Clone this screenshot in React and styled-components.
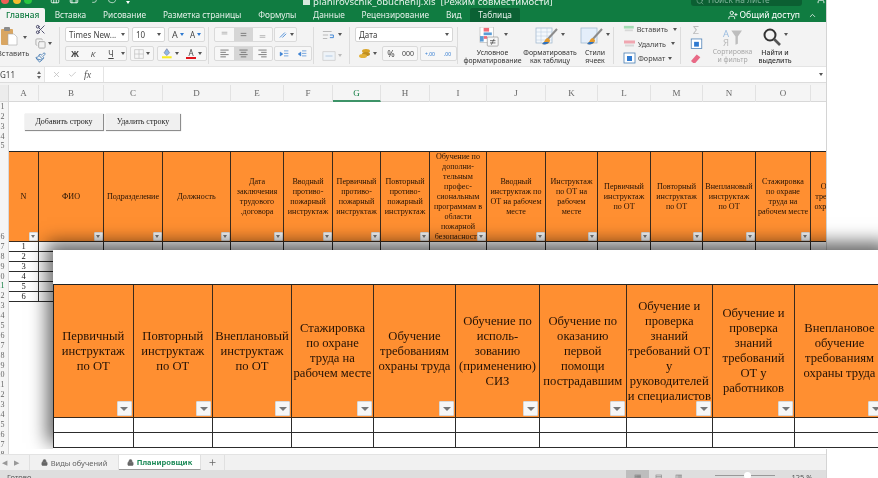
import React from 'react';
import styled, { createGlobalStyle } from 'styled-components';
import { Scissors, Copy, Paintbrush, Home, Save, Undo2, RotateCw, Search, User, UserPlus, ChevronUp, X, Check, Plus, Lock } from 'lucide-react';

const GlobalStyle = createGlobalStyle`
  html, body { margin: 0; padding: 0; background: #fff; }
  body { font-family: 'Noto Sans', sans-serif; }
  * { box-sizing: border-box; }
`;

const Page = styled.div`
  position: relative;
  width: 878px;
  height: 478px;
  overflow: hidden;
  background: #fff;
  filter: blur(0.3px);
`;

const Excel = styled.div`
  width: 827px;
  height: 478px;
  display: flex;
  flex-direction: column;
  overflow: hidden;
  border-right: 1px solid #d4d4d4;
  background: #fff;
`;

const GreenBar = styled.div`
  background: #107c41;
  height: 22px;
  flex: none;
  color: #fff;
`;

const TitleRow = styled.div`
  height: 7px;
  display: flex;
  align-items: flex-end;
  overflow: hidden;
  padding-left: 1px;
`;

const Lights = styled.div`
  display: flex;
  gap: 3.5px;
  width: 49px;
  flex: none;
  margin-bottom: 3px;
`;

const Light = styled.span`
  width: 8px;
  height: 8px;
  border-radius: 50%;
  background: ${(p) => p.$color};
  flex: none;
`;

const QuickIcons = styled.div`
  display: flex;
  align-items: flex-end;
  gap: 9px;
  width: 95px;
  flex: none;
  margin-bottom: 3px;
`;

const DocMark = styled.span`
  width: 7px;
  height: 8px;
  flex: none;
  margin: 0 3px 2px 158px;
  background: #d8e8de;
`;

const FileTitle = styled.span`
  font-size: 9.6px;
  line-height: 11px;
  color: #e6f2ea;
  white-space: pre;
`;

const SheetSearch = styled.div`
  margin: 0 14px 1px auto;
  width: 111px;
  height: 14px;
  flex: none;
  border-radius: 3px;
  background: #0b5f32;
  font-size: 8.4px;
  line-height: 10px;
  padding: 0 0 1px 5px;
  color: #7fb298;
  display: flex;
  align-items: flex-end;
  gap: 4px;
`;

const UserMark = styled(User)`
  flex: none;
  margin-bottom: 3px;
`;

const Tabs = styled.div`
  height: 15px;
  display: flex;
  align-items: stretch;
  padding-top: 1px;
`;

const Tab = styled.div`
  font-size: 8.3px;
  line-height: 14px;
  padding: 0 ${(p) => p.$pad ?? 8.4}px;
  white-space: nowrap;
  border-radius: 2px 2px 0 0;
  color: ${(p) => (p.$on ? '#107c41' : '#e4f0e9')};
  background: ${(p) => (p.$on ? '#f3f3f3' : p.$dark ? '#0b6134' : 'transparent')};
  font-weight: ${(p) => (p.$on ? 500 : 400)};
  margin-right: ${(p) => p.$mr || 0}px;
`;

const Share = styled.div`
  margin-left: auto;
  display: flex;
  align-items: center;
  gap: 2px;
  font-size: 8.6px;
  padding-right: 9px;
  color: #fff;
`;

const ShareChevron = styled(ChevronUp)`
  margin-left: 6px;
`;

const Ribbon = styled.div`
  height: 44px;
  flex: none;
  background: #f3f3f3;
  display: flex;
  padding: 5px 0 0;
`;

const Group = styled.div`
  width: ${(p) => p.$w}px;
  height: 37px;
  flex: none;
  padding-left: ${(p) => p.$pl || 0}px;
  border-right: ${(p) => (p.$last ? 'none' : '1px solid #dcdcdc')};
  display: flex;
  flex-direction: ${(p) => p.$dir || 'column'};
  gap: ${(p) => p.$gap ?? 4}px;
  position: relative;
  color: #555;
`;

const Row = styled.div`
  display: flex;
  gap: ${(p) => p.$gap ?? 3}px;
  height: 15px;
  align-items: ${(p) => (p.$center ? 'center' : 'stretch')};
`;

const Select = styled.div`
  width: ${(p) => p.$w}px;
  background: #fff;
  border: 1px solid #d6d6d6;
  border-radius: 2px;
  font-size: 8px;
  line-height: 13px;
  padding-left: 3px;
  color: #444;
  display: flex;
  justify-content: space-between;
  align-items: center;
  white-space: nowrap;
  overflow: hidden;
`;

const Caret = styled.span`
  width: 0;
  height: 0;
  flex: none;
  margin: ${(p) => p.$mt ?? 0}px ${(p) => p.$m ?? 0}px 0;
  border-left: 2px solid transparent;
  border-right: 2px solid transparent;
  border-top: 3px solid ${(p) => p.$c || '#555'};
`;

const PasteCaret = styled(Caret)`
  position: absolute;
  left: 23px;
  top: 9px;
`;

const BtnSet = styled.div`
  display: flex;
  border: 1px solid #dadada;
  border-radius: 2px;
  background: #f7f7f7;
  margin-left: ${(p) => p.$ml || 0}px;
`;

const Btn = styled.div`
  width: ${(p) => p.$w || 18}px;
  display: flex;
  align-items: center;
  justify-content: center;
  gap: 2px;
  font-size: ${(p) => p.$fs || 9}px;
  font-style: ${(p) => (p.$it ? 'italic' : 'normal')};
  font-weight: ${(p) => (p.$b ? 700 : 400)};
  text-decoration: ${(p) => (p.$u ? 'underline' : 'none')};
  background: ${(p) => (p.$on ? '#d6d6d6' : 'transparent')};
  color: ${(p) => (p.$blue ? '#2f7ad1' : '#444')};
`;

const TextColorMark = styled.span`
  border-bottom: 2.5px solid #e0141c;
  line-height: 9px;
  padding: 0 2px;
`;

const PasteBlock = styled.div`
  width: 30px;
  display: flex;
  flex-direction: column;
  align-items: flex-start;
`;

const SmallCol = styled.div`
  display: flex;
  flex-direction: column;
  gap: 3px;
  align-items: center;
  color: #555;
  width: 20px;
  margin-top: -3px;
`;

const CopyRow = styled.div`
  display: flex;
  align-items: center;
  gap: 2px;
  margin-right: -7px;
`;

const PasteLabel = styled.span`
  font-size: 7.4px;
  line-height: 10px;
  margin: 2px 0 0 -3px;
  color: #444;
`;

const Sigma = styled.span`
  font-size: 11px;
  line-height: 11px;
  color: #bbb;
`;

const Big = styled.div`
  width: ${(p) => p.$w}px;
  flex: none;
  color: ${(p) => (p.$off ? '#a8a8a8' : '#333')};
  display: flex;
  flex-direction: column;
  align-items: center;
  font-size: 6.9px;
  line-height: 8.2px;
  text-align: center;
  white-space: pre;
  font-weight: ${(p) => (p.$strong ? 500 : 400)};
`;

const BigIcon = styled.div`
  height: 20px;
  margin-bottom: 2px;
  display: flex;
  align-items: flex-start;
  gap: 2px;
`;

const CellAction = styled.div`
  display: flex;
  align-items: center;
  gap: 2px;
  height: 12px;
  font-size: 7.2px;
  color: #444;
  white-space: nowrap;
  &:first-child {
    margin-top: -4px;
  }
`;

const FormulaBar = styled.div`
  height: 17px;
  flex: none;
  background: #fff;
  display: flex;
  align-items: center;
  border-top: 1px solid #e4e4e4;
  border-bottom: 1px solid #dcdcdc;
  font-size: 8px;
  color: #444;
`;

const NameBox = styled.div`
  width: 45px;
  height: 100%;
  display: flex;
  justify-content: space-between;
  align-items: center;
  padding-right: 3px;
  background: #f8f8f8;
  border-right: 1px solid #e4e4e4;
`;

const Stepper = styled.span`
  display: flex;
  flex-direction: column;
  gap: 2px;
  &::before {
    content: '';
    border-left: 2px solid transparent;
    border-right: 2px solid transparent;
    border-bottom: 3px solid #666;
  }
  &::after {
    content: '';
    border-left: 2px solid transparent;
    border-right: 2px solid transparent;
    border-top: 3px solid #666;
  }
`;

const FormulaIcons = styled.div`
  width: 59px;
  height: 100%;
  display: flex;
  align-items: center;
  padding-left: 7px;
  gap: 7px;
  color: #bcbcbc;
  border-right: 1px solid #e4e4e4;
`;

const Fx = styled.span`
  font-family: 'Liberation Serif', serif;
  font-style: italic;
  font-size: 10px;
  color: #555;
`;

const ExpandCaret = styled(Caret)`
  margin-left: auto;
  margin-right: 3px;
`;

const Gutter = styled.div`
  height: 2px;
  flex: none;
  background: #f3f3f3;
`;

const ColHead = styled.div`
  height: 17px;
  flex: none;
  display: flex;
  background: #f5f5f5;
  border-bottom: 1px solid #d8d8d8;
`;

const Corner = styled.div`
  width: 9px;
  flex: none;
  border-right: 1px solid #d8d8d8;
  background: #ececec;
`;

const ColLetter = styled.div`
  width: ${(p) => p.$w}px;
  flex: none;
  text-align: center;
  font-family: 'Liberation Serif', serif;
  font-size: 9px;
  line-height: 16px;
  color: ${(p) => (p.$on ? '#107c41' : '#666')};
  border-right: 1px solid #e2e2e2;
  border-bottom: ${(p) => (p.$on ? '2px solid #3d9368' : 'none')};
  height: 17px;
`;

const SheetArea = styled.div`
  flex: 1;
  min-height: 0;
  display: flex;
  overflow: hidden;
`;

const RowHeads = styled.div`
  width: 9px;
  flex: none;
  background: #f5f5f5;
  border-right: 1px solid #d8d8d8;
  overflow: hidden;
`;

const RowHead = styled.div`
  height: ${(p) => p.$h || 9.9}px;
  font-family: 'Liberation Serif', serif;
  font-size: 8px;
  line-height: 10px;
  display: flex;
  align-items: flex-end;
  justify-content: flex-end;
  padding-right: 3.5px;
  color: ${(p) => (p.$on ? '#107c41' : '#666')};
`;

const Sheet = styled.div`
  flex: 1;
  min-width: 0;
  overflow: hidden;
`;

const ButtonsRow = styled.div`
  height: 49px;
  display: flex;
  align-items: flex-start;
  gap: 2px;
  padding: 12px 0 0 16px;
`;

const MacroButton = styled.div`
  width: ${(p) => p.$w}px;
  height: 17px;
  background: #f0f0f0;
  border-right: 1px solid #8d8d8d;
  border-bottom: 1px solid #8d8d8d;
  box-shadow: 0 0 1px #bbb;
  font-family: 'Liberation Serif', serif;
  font-size: 8px;
  line-height: 16px;
  text-align: center;
  color: #222;
`;

const Grid = styled.div`
  display: grid;
  grid-template-columns: ${(p) => p.$cols};
  grid-template-rows: ${(p) => p.$head}px;
  grid-auto-rows: ${(p) => p.$rowH}px;
  width: max-content;
  border-top: ${(p) => (p.$big ? 1.5 : 1)}px solid #222;
  border-left: ${(p) => (p.$big ? '1px solid #222' : 'none')};
  font-family: 'Liberation Serif', serif;
`;

const HeadCell = styled.div`
  position: relative;
  background: #ff8f31;
  border-right: ${(p) => (p.$big ? 1.5 : 1)}px solid #3a2a1c;
  border-bottom: 1px solid #3a2a1c;
  display: flex;
  align-items: center;
  justify-content: center;
  text-align: center;
  white-space: pre;
  overflow: hidden;
  font-size: ${(p) => (p.$big ? 12.6 : 8.1)}px;
  line-height: ${(p) => (p.$big ? 15 : 10)}px;
  color: #241205;
`;

const FilterBtn = styled.span`
  position: absolute;
  right: ${(p) => (p.$big ? 1 : 0.5)}px;
  bottom: ${(p) => (p.$big ? 1 : 0.5)}px;
  width: ${(p) => (p.$big ? 15 : 9)}px;
  height: ${(p) => (p.$big ? 15 : 9)}px;
  background: #f6f6f6;
  border: ${(p) => (p.$big ? 1 : 0.5)}px solid #d8d8d8;
  border-radius: 1px;
  display: flex;
  align-items: center;
  justify-content: center;
  &::after {
    content: '';
    border-left: ${(p) => (p.$big ? 4 : 2.5)}px solid transparent;
    border-right: ${(p) => (p.$big ? 4 : 2.5)}px solid transparent;
    border-top: ${(p) => (p.$big ? 4 : 3)}px solid #777;
  }
`;

const DataCell = styled.div`
  background: #fff;
  border-right: ${(p) => (p.$big ? 1.5 : 1)}px solid #2c2c2c;
  border-bottom: 1px solid #2c2c2c;
  font-size: 8.5px;
  line-height: 9px;
  text-align: center;
  color: #222;
`;

const SheetTabs = styled.div`
  height: 16px;
  flex: none;
  background: #f1f1f1;
  border-top: 1px solid #e3e3e3;
  display: flex;
  align-items: stretch;
  font-size: 7.5px;
  color: #666;
`;

const TabArrows = styled.div`
  width: 30px;
  display: flex;
  align-items: center;
  gap: 7px;
  padding-left: 2px;
  border-right: 1px solid #e0e0e0;
  color: #999;
  font-size: 7px;
`;

const SheetTab = styled.div`
  width: ${(p) => p.$w}px;
  display: flex;
  align-items: center;
  justify-content: center;
  gap: 3px;
  background: ${(p) => (p.$on ? '#fff' : 'transparent')};
  color: ${(p) => (p.$on ? '#1c8a58' : '#666')};
  font-weight: ${(p) => (p.$on ? 700 : 400)};
  border-bottom: ${(p) => (p.$on ? '1px solid #999' : 'none')};
  border-right: 1px solid #e0e0e0;
`;

const StatusBar = styled.div`
  height: 8px;
  flex: none;
  background: #dedede;
  display: flex;
  font-size: 7.5px;
  line-height: 14px;
  color: #555;
  padding-left: 7px;
  overflow: hidden;
`;

const ViewBtn = styled.span`
  width: ${(p) => p.$w || 20}px;
  margin-left: ${(p) => p.$ml || 0}px;
  background: ${(p) => (p.$on ? '#bdbdbd' : 'transparent')};
  text-align: center;
  color: #777;
`;

const Slider = styled.span`
  width: 60px;
  height: 1px;
  background: #999;
  margin: 5px 0 0 26px;
  position: relative;
  &::after {
    content: '';
    position: absolute;
    left: 29px;
    top: -3px;
    width: 7px;
    height: 7px;
    border-radius: 50%;
    background: #fff;
  }
`;

const Zoom = styled.span`
  margin-left: 16px;
`;

const Snippet = styled.div`
  position: absolute;
  left: 53px;
  top: 250px;
  width: 840px;
  height: 199px;
  padding-top: 34px;
  background: #fff;
  box-shadow: -5px -7px 17px 1px rgba(0, 0, 0, 0.6);
  clip-path: inset(-40px -40px 0 -40px);
`;

const Gray = ({ children, size = 12, ...rest }) => (
  <svg width={size} height={size} viewBox="0 0 16 16" {...rest}>{children}</svg>
);

const LinesIcon = ({ rows }) => (
  <Gray size={11}>
    {rows.map(([x1, x2], i) => (
      <line key={i} x1={x1} x2={x2} y1={3 + i * 3.3} y2={3 + i * 3.3} stroke="#666" strokeWidth="1.2" />
    ))}
  </Gray>
);

const PasteIcon = () => (
  <svg width="20" height="19" viewBox="0 0 20 19">
    <rect x="1" y="2" width="12" height="16" rx="1" fill="#d9a662" />
    <rect x="4" y="0" width="6" height="4" rx="1" fill="#8c8c8c" />
    <path d="M8 7h6l3 3v8H8z" fill="#fff" stroke="#aaa" strokeWidth=".6" />
  </svg>
);

const CondIcon = () => (
  <svg width="24" height="20" viewBox="0 0 24 22">
    <rect x="1" y="0" width="15" height="17" fill="#fff" stroke="#b5b5b5" strokeWidth=".7" />
    <rect x="5" y="1" width="6" height="4" fill="#f06b78" />
    <rect x="5" y="6" width="9" height="3" fill="#5b9bd5" />
    <rect x="5" y="10" width="4" height="3" fill="#f06b78" />
    <rect x="1" y="10" width="4" height="6" fill="#5b9bd5" />
    <rect x="9" y="11" width="12" height="10" rx="1" fill="#f7f7f7" stroke="#888" strokeWidth=".7" />
    <path d="M12 15h6M12 17.5h6M16.5 13l-3 6.5" stroke="#444" strokeWidth=".8" fill="none" />
  </svg>
);

const TableBrush = ({ light }) => (
  <svg width="24" height="20" viewBox="0 0 24 20">
    <rect x="1" y="1" width="16" height="15" fill={light ? '#e4eefa' : '#f4f8fc'} stroke="#9bb4cc" strokeWidth=".7" />
    {!light && <path d="M1 5h16M1 9h16M1 13h16M6 1v15M12 1v15" stroke="#b6c9dc" strokeWidth=".5" />}
    <path d="M22 2 12 13" stroke="#8c8c8c" strokeWidth="2" />
    <path d="M13 11c-3 0-3 4-6 6 4 1 8 0 8-4z" fill="#e39a2d" />
    <path d="M7 17c3 1 6 0 7-2l-5 0z" fill="#2d72c4" />
  </svg>
);

const CellsIcon = ({ kind }) => (
  <svg width="13" height="12" viewBox="0 0 13 12">
    {kind === 'format' ? (
      <>
        <rect x="1" y="1" width="11" height="10" fill="#fff" stroke="#4a7fb5" strokeWidth=".8" />
        <rect x="4" y="4" width="5" height="5" fill="#2f7ad1" />
      </>
    ) : (
      <>
        <rect x="1" y="2.5" width="11" height="3" fill={kind === 'del' ? '#f0a6b0' : '#a5dcb4'} />
        <rect x="2" y="6.5" width="9" height="2" fill="#d8d8d8" />
      </>
    )}
  </svg>
);

const Magnifier = () => (
  <svg width="20" height="20" viewBox="0 0 20 20">
    <circle cx="8" cy="8" r="5.5" fill="none" stroke="#333" strokeWidth="2" />
    <path d="m12 12 6 6" stroke="#555" strokeWidth="2.6" />
  </svg>
);

const Coins = () => (
  <svg width="13" height="11" viewBox="0 0 13 11">
    <ellipse cx="8" cy="3" rx="4" ry="2" fill="#d9a429" />
    <ellipse cx="8" cy="6" rx="4" ry="2" fill="#c08f20" />
    <ellipse cx="5" cy="8" rx="4" ry="2" fill="#e3b23a" />
  </svg>
);

const topCols = [
  ['A', 30], ['B', 65], ['C', 59], ['D', 68], ['E', 53], ['F', 49], ['G', 48], ['H', 49],
  ['I', 57], ['J', 59], ['K', 52], ['L', 53], ['M', 52], ['N', 53], ['O', 55], ['P', 54],
];

const topHeads = [
  'N', 'ФИО', 'Подразделение', 'Должность', 'Дата\nзаключения\nтрудового\n.договора',
  'Вводный\nпротиво-\nпожарный\nинструктаж', 'Первичный\nпротиво-\nпожарный\nинструктаж',
  'Повторный\nпротиво-\nпожарный\nинструктаж',
  'Обучение по\nдополни-\nтельным\nпрофес-\nсиональным\nпрограммам в\nобласти\nпожарной\nбезопасности',
  'Вводный\nинструктаж по\nОТ на рабочем\nместе', 'Инструктаж\nпо ОТ на\nрабочем\nместе',
  'Первичный\nинструктаж\nпо ОТ', 'Повторный\nинструктаж\nпо ОТ', 'Внеплановый\nинструктаж\nпо ОТ',
  'Стажировка\nпо охране\nтруда на\nрабочем месте', 'Обучение\nтребованиям\nохраны труда',
];

const bigCols = [79.5, 79.5, 79, 82, 82, 84, 86.5, 86.5, 82, 90];

const bigHeads = [
  'Первичный\nинструктаж\nпо ОТ', 'Повторный\nинструктаж\nпо ОТ', 'Внеплановый\nинструктаж\nпо ОТ',
  'Стажировка\nпо охране\nтруда на\nрабочем месте', 'Обучение\nтребованиям\nохраны труда',
  'Обучение по\nисполь-\nзованию\n(применению)\nСИЗ', 'Обучение по\nоказанию\nпервой\nпомощи\nпострадавшим',
  'Обучение и\nпроверка\nзнаний\nтребований ОТ\nу\nруководителей\nи специалистов',
  'Обучение и\nпроверка\nзнаний\nтребований\nОТ у\nработников', 'Внеплановое\nобучение\nтребованиям\nохраны труда',
];

const topTemplate = topCols.map(([, w]) => `${w}px`).join(' ');
const bigTemplate = bigCols.map((w) => `${w}px`).join(' ');

const App = () => {
  const beforeHeader = [1, 2, 3, 4, 5];
  const afterHeader = Array.from({ length: 24 }, (_, i) => i + 7);

  return (
    <Page>
      <GlobalStyle />
      <Excel>
        <GreenBar>
          <TitleRow>
            <Lights>
              <Light $color="#ee5f57" />
              <Light $color="#f5bd2e" />
              <Light $color="#29c73f" />
            </Lights>
            <QuickIcons>
              <Home size={10} color="#fff" />
              <Save size={10} color="#fff" />
              <Undo2 size={10} color="#cfe3d8" />
              <RotateCw size={10} color="#cfe3d8" />
              <Caret $c="#fff" />
            </QuickIcons>
            <DocMark />
            <FileTitle>planirovschik_obuchenij.xls  [Режим совместимости]</FileTitle>
            <SheetSearch><Search size={8} />Поиск на листе</SheetSearch>
            <UserMark size={10} color="#fff" />
          </TitleRow>
          <Tabs>
            <Tab $on $pad={6} $mr={1}>Главная</Tab>
            <Tab>Вставка</Tab>
            <Tab>Рисование</Tab>
            <Tab>Разметка страницы</Tab>
            <Tab>Формулы</Tab>
            <Tab>Данные</Tab>
            <Tab>Рецензирование</Tab>
            <Tab>Вид</Tab>
            <Tab $dark>Таблица</Tab>
            <Share><UserPlus size={10} />Общий доступ<ShareChevron size={9} /></Share>
          </Tabs>
        </GreenBar>

        <Ribbon>
          <Group $w={60} $dir="row" $gap={0}>
            <PasteBlock>
              <PasteIcon />
              <PasteCaret />
              <PasteLabel>Вставить</PasteLabel>
            </PasteBlock>
            <SmallCol>
              <Scissors size={11} color="#446" />
              <CopyRow><Copy size={11} color="#aaa" /><Caret /></CopyRow>
              <Paintbrush size={11} color="#4a7fb5" />
            </SmallCol>
          </Group>
          <Group $w={149} $pl={5}>
            <Row>
              <Select $w={64}>Times New...<Caret $m={3} /></Select>
              <Select $w={33}>10<Caret $m={3} /></Select>
              <BtnSet>
                <Btn $fs={9} $w={18}>A<Caret $c="#2f7ad1" /></Btn>
                <Btn $fs={8} $w={17}>A<Caret $c="#2f7ad1" /></Btn>
              </BtnSet>
            </Row>
            <Row>
              <BtnSet>
                <Btn $b $fs={8}>Ж</Btn>
                <Btn $it $fs={8}>К</Btn>
                <Btn $u $fs={8}>Ч</Btn>
                <Btn $w={6}><Caret /></Btn>
              </BtnSet>
              <BtnSet>
                <Btn $w={22}>
                  <Gray size={10}><path d="M1 1h14v14H1zM8 1v14M1 8h14" fill="none" stroke="#bbb" strokeWidth="1" /></Gray>
                  <Caret />
                </Btn>
              </BtnSet>
              <BtnSet>
                <Btn $w={24}>
                  <Gray size={11}><path d="M7 1 3 7l4 4 4-4z" fill="#8fb8e6" stroke="#557" strokeWidth=".7" /><rect x="0" y="12" width="14" height="3" fill="#f7ec22" /></Gray>
                  <Caret />
                </Btn>
                <Btn $w={24} $fs={8}>
                  <TextColorMark>A</TextColorMark>
                  <Caret />
                </Btn>
              </BtnSet>
            </Row>
          </Group>
          <Group $w={105} $pl={5}>
            <Row>
              <BtnSet>
                <Btn $w={19}><Gray size={9}><path d="M3 4h10M3 7h10" stroke="#999" strokeWidth="1.2" /></Gray></Btn>
                <Btn $w={19} $on><Gray size={9}><path d="M3 6h10M3 10h10" stroke="#555" strokeWidth="1.2" /></Gray></Btn>
                <Btn $w={19}><Gray size={9}><path d="M3 10h10M3 13h10" stroke="#aaa" strokeWidth="1.4" /></Gray></Btn>
              </BtnSet>
              <BtnSet $ml={-2}>
                <Btn $w={21}><Gray size={10}><path d="m3 12 8-8M7 12l6-6" stroke="#2f7ad1" strokeWidth="1.3" /></Gray><Caret /></Btn>
              </BtnSet>
            </Row>
            <Row>
              <BtnSet>
                <Btn $w={19}><LinesIcon rows={[[2, 14], [2, 10], [2, 14], [2, 10]]} /></Btn>
                <Btn $w={19} $on><LinesIcon rows={[[2, 14], [4, 12], [2, 14], [4, 12]]} /></Btn>
                <Btn $w={19}><LinesIcon rows={[[2, 14], [6, 14], [2, 14], [6, 14]]} /></Btn>
              </BtnSet>
              <BtnSet $ml={-2}>
                <Btn $w={18}><Gray size={10}><path d="M6 8 2 5v6zM8 3h7M8 7h7M8 11h7" stroke="#2f7ad1" fill="#2f7ad1" strokeWidth="1" /></Gray></Btn>
                <Btn $w={18}><Gray size={10}><path d="M2 8l4-3v6zM8 3h7M8 7h7M8 11h7" stroke="#2f7ad1" fill="#2f7ad1" strokeWidth="1" /></Gray></Btn>
              </BtnSet>
            </Row>
          </Group>
          <Group $w={36} $pl={8} $gap={6}>
            <Row $gap={2} $center>
              <Gray size={14}><path d="M1 4h10M1 8h6M1 12h5" stroke="#b9b9b9" strokeWidth="1.3" /><path d="M9 8h4v3H9" stroke="#2f7ad1" fill="none" /></Gray>
              <Caret />
            </Row>
            <Row $gap={2} $center>
              <Gray size={14}><path d="M1 3h14v10H1z" fill="#eef3f8" stroke="#d0d0d0" /><path d="M4 8h8" stroke="#aac4de" /></Gray>
              <Caret $c="#bbb" />
            </Row>
          </Group>
          <Group $w={108} $pl={5}>
            <Row><Select $w={98}>Дата<Caret $m={3} /></Select></Row>
            <Row $gap={2}>
              <Btn $w={25}><Coins /><Caret /></Btn>
              <BtnSet>
                <Btn $w={16} $fs={9}>%</Btn>
                <Btn $w={18} $fs={7}>000</Btn>
              </BtnSet>
              <BtnSet>
                <Btn $w={18} $fs={5} $blue>+.00</Btn>
                <Btn $w={17} $fs={5} $blue>.00</Btn>
              </BtnSet>
            </Row>
          </Group>
          <Group $w={156} $pl={6} $dir="row" $gap={2}>
            <Big $w={57}>
              <BigIcon><CondIcon /><Caret $mt={6} /></BigIcon>
              {'Условное\nформатирование'}
            </Big>
            <Big $w={54}>
              <BigIcon><TableBrush /><Caret $mt={6} /></BigIcon>
              {'Форматировать\nкак таблицу'}
            </Big>
            <Big $w={32}>
              <BigIcon><TableBrush light /><Caret $mt={6} /></BigIcon>
              {'Стили\nячеек'}
            </Big>
          </Group>
          <Group $w={67} $pl={9} $gap={2.5}>
            <CellAction><CellsIcon kind="ins" />Вставить<Caret $m={3} /></CellAction>
            <CellAction><CellsIcon kind="del" />Удалить<Caret $m={3} /></CellAction>
            <CellAction><CellsIcon kind="format" />Формат<Caret $m={1} /></CellAction>
          </Group>
          <Group $w={118} $pl={5} $dir="row" $gap={6} $last>
            <SmallCol>
              <Sigma>Σ</Sigma>
              <CellsIcon kind="format" />
              <Gray size={12}><path d="m1 11 8-9 5 4-7 8H4z" fill="#e86a86" /></Gray>
            </SmallCol>
            <Big $w={41} $off>
              <BigIcon>
                <Gray size={19}><path d="M7 3h9l-3.5 5v6l-2 1V8z" fill="#bdbdbd" /><text x="0" y="8" fontSize="8" fill="#9cbde0">А</text><text x="0" y="16" fontSize="8" fill="#bbb">Я</text></Gray>
              </BigIcon>
              {'Сортировка\nи фильтр'}
            </Big>
            <Big $w={32} $strong>
              <BigIcon><Magnifier /><Caret $mt={6} /></BigIcon>
              {'Найти и\nвыделить'}
            </Big>
          </Group>
        </Ribbon>

        <FormulaBar>
          <NameBox><span>G11</span><Stepper /></NameBox>
          <FormulaIcons>
            <X size={9} />
            <Check size={9} />
            <Fx>fx</Fx>
          </FormulaIcons>
          <ExpandCaret />
        </FormulaBar>
        <Gutter />
        <ColHead>
          <Corner />
          {topCols.map(([name, w]) => (
            <ColLetter key={name} $w={w} $on={name === 'G'}>{name !== 'P' ? name : ''}</ColLetter>
          ))}
        </ColHead>

        <SheetArea>
          <RowHeads>
            {beforeHeader.map((n) => <RowHead key={n}>{n}</RowHead>)}
            <RowHead $h={90.5}>6</RowHead>
            {afterHeader.map((n) => <RowHead key={n} $on={n === 11}>{n}</RowHead>)}
          </RowHeads>
          <Sheet>
            <ButtonsRow>
              <MacroButton $w={79}>Добавить строку</MacroButton>
              <MacroButton $w={75}>Удалить строку</MacroButton>
            </ButtonsRow>
            <Grid $cols={topTemplate} $head={90} $rowH={10}>
              {topHeads.map((text, i) => (
                <HeadCell key={i}>{text}<FilterBtn /></HeadCell>
              ))}
              {[1, 2, 3, 4, 5, 6].map((n) =>
                topCols.map(([name], i) => (
                  <DataCell key={`${n}${name}`}>{i === 0 ? n : ''}</DataCell>
                ))
              )}
            </Grid>
          </Sheet>
        </SheetArea>

        <SheetTabs>
          <TabArrows><span>◀</span><span>▶</span></TabArrows>
          <SheetTab $w={89}><Lock size={7} fill="#666" />Виды обучений</SheetTab>
          <SheetTab $w={82} $on><Lock size={7} color="#666" fill="#666" />Планировщик</SheetTab>
          <SheetTab $w={24}><Plus size={9} /></SheetTab>
        </SheetTabs>
        <StatusBar>
          <span>Готово</span>
          <ViewBtn $on $w={23} $ml={595}>▦</ViewBtn>
          <ViewBtn>▤</ViewBtn>
          <ViewBtn>▥</ViewBtn>
          <Slider />
          <Zoom>125 %</Zoom>
        </StatusBar>
      </Excel>

      <Snippet>
        <Grid $big $cols={bigTemplate} $head={133} $rowH={15}>
          {bigHeads.map((text, i) => (
            <HeadCell $big key={i}>{text}<FilterBtn $big /></HeadCell>
          ))}
          {[0, 1].map((r) =>
            bigHeads.map((_, i) => <DataCell $big key={`${r}-${i}`} />)
          )}
        </Grid>
      </Snippet>
    </Page>
  );
};

export default App;
